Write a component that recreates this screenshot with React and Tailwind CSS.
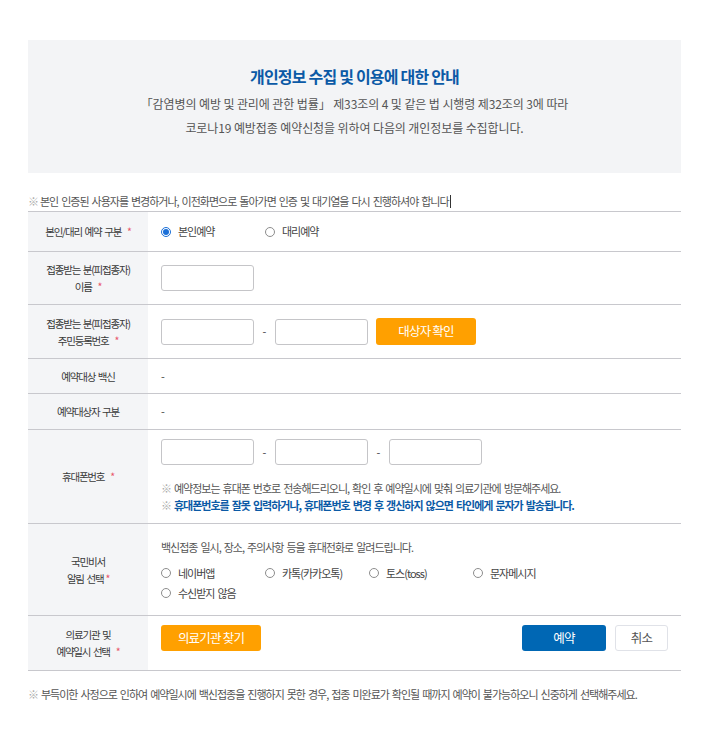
import React from 'react';

const body = "text-[11px] tracking-[-1px] [word-spacing:1.5px]";
const label = "text-[10.5px] tracking-[-1.2px] [word-spacing:1.5px]";

const Star = ({ tight }) => (
  <span className={`text-[#e8576a] ${tight ? 'ml-[2px]' : 'ml-[6px]'}`}>*</span>
);

const Radio = ({ checked, label }) => (
  <label className="flex items-center h-[20px] gap-[7px] text-[#444]">
    {checked ? (
      <span className="w-[10px] h-[10px] rounded-full border border-[#1a6fd8] bg-white flex items-center justify-center shrink-0">
        <span className="w-[6px] h-[6px] rounded-full bg-[#1a6fd8]" />
      </span>
    ) : (
      <span className="w-[10px] h-[10px] rounded-full border border-[#8d8d8d] bg-white shrink-0" />
    )}
    <span className={body}>{label}</span>
  </label>
);

const Input = () => (
  <input className="w-[93px] h-[26px] border border-[#c5c5c8] rounded-[3px] bg-white outline-none shrink-0" />
);

const Dash = () => <span className="w-[21px] text-center text-[#444] text-[11px]">-</span>;

const Row = ({ h, title, children, className = '' }) => (
  <div className="flex border-b border-[#c8c8cd]" style={{ height: h }}>
    <div className={`w-[120px] shrink-0 bg-[#f4f5f7] flex flex-col items-center justify-center text-center text-[#3a3a3a] leading-[17px] ${label}`}>
      {title}
    </div>
    <div className={`flex-1 pl-[13px] ${className}`}>{children}</div>
  </div>
);

export default function App() {
  return (
    <div className="w-[718px] min-h-[741px] bg-white font-['Noto_Sans_CJK_KR',sans-serif] pt-[40px]">
      <div className="ml-[28px] w-[653px]">
        {/* 안내 박스 */}
        <div className="bg-[#f3f4f6] h-[133px] pt-[24px]">
          <p className="text-center text-[16px] leading-[24px] font-bold text-[#0b5aa6] tracking-[-0.8px]">
            개인정보 수집 및 이용에 대한 안내
          </p>
          <p className="mt-[4px] text-center text-[12px] leading-[24px] text-[#555] tracking-[-0.1px]">
            「감염병의 예방 및 관리에 관한 법률」 제33조의 4 및 같은 법 시행령 제32조의 3에 따라
          </p>
          <p className="text-center text-[12px] leading-[24px] text-[#555] tracking-[-0.1px]">
            코로나19 예방접종 예약신청을 위하여 다음의 개인정보를 수집합니다.
          </p>
        </div>

        <div className={`h-[38px] pb-[3px] flex items-end ${body} text-[#555]`}>
          <span className="leading-[14px] flex items-center">
            <span className="text-[#aaa] mr-[2px]">※</span>본인 인증된 사용자를 변경하거나, 이전화면으로 돌아가면 인증 및 대기열을 다시 진행하셔야 합니다
            <span className="inline-block w-px h-[13px] bg-[#333] ml-[1px]" />
          </span>
        </div>

        {/* 예약 표 */}
        <div className="border-t border-[#c8c8cd]">
          <Row h={40} title={<span>본인/대리 예약 구분<Star /></span>} className="flex items-center">
            <div className="w-[104px]"><Radio checked label="본인예약" /></div>
            <div className="w-[104px]"><Radio label="대리예약" /></div>
          </Row>

          <Row h={53} title={<><span>접종받는 분(피접종자)</span><span>이름<Star /></span></>} className="flex items-center">
            <Input />
          </Row>

          <Row h={54} title={<><span>접종받는 분(피접종자)</span><span>주민등록번호<Star /></span></>} className="flex items-center">
            <Input />
            <Dash />
            <Input />
            <button className="ml-[8px] w-[100px] h-[27px] rounded-[3px] bg-[#ffa000] text-white text-[12.5px] tracking-[-0.8px]">
              대상자 확인
            </button>
          </Row>

          <Row h={35} title="예약대상 백신" className={`flex items-center text-[#444] ${body}`}>
            -
          </Row>

          <Row h={36} title="예약대상자 구분" className={`flex items-center text-[#444] ${body}`}>
            -
          </Row>

          <Row h={94} title={<span>휴대폰번호<Star /></span>} className="pt-[9px]">
            <div className="flex items-center">
              <Input />
              <Dash />
              <Input />
              <Dash />
              <Input />
            </div>
            <div className={`mt-[15px] leading-[17px] ${body}`}>
              <p className="text-[#555]"><span className="text-[#aaa]">※</span> 예약정보는 휴대폰 번호로 전송해드리오니, 확인 후 예약일시에 맞춰 의료기관에 방문해주세요.</p>
              <p className="text-[#0b5aa6] font-bold"><span className="text-[#aaa] font-normal">※</span> 휴대폰번호를 잘못 입력하거나, 휴대폰번호 변경 후 갱신하지 않으면 타인에게 문자가 발송됩니다.</p>
            </div>
          </Row>

          <Row h={92} title={<><span>국민비서</span><span>알림 선택<Star tight /></span></>} className="pt-[15px]">
            <p className={`leading-[17px] text-[#555] ${body}`}>백신접종 일시, 장소, 주의사항 등을 휴대전화로 알려드립니다.</p>
            <div className="mt-[7px] grid grid-cols-[repeat(4,104px)]">
              <Radio label="네이버앱" />
              <Radio label="카톡(카카오톡)" />
              <Radio label="토스(toss)" />
              <Radio label="문자메시지" />
              <Radio label="수신받지 않음" />
            </div>
          </Row>

          <Row h={55} title={<><span>의료기관 및</span><span>예약일시 선택<Star /></span></>} className="flex items-start pt-[9px] pr-[13px]">
            <button className="w-[100px] h-[26px] rounded-[3px] bg-[#ffa000] text-white text-[12.5px] tracking-[-0.8px]">
              의료기관 찾기
            </button>
            <button className="ml-auto w-[84px] h-[26px] rounded-[3px] bg-[#0067b4] text-white text-[12.5px] tracking-[-0.8px]">
              예약
            </button>
            <button className="ml-[9px] w-[53px] h-[26px] rounded-[3px] bg-white border border-[#e0e2e8] text-[#555] text-[12.5px] tracking-[-0.8px]">
              취소
            </button>
          </Row>
        </div>

        <p className={`mt-[16px] leading-[14px] text-[#555] ${body}`}>
          <span className="text-[#aaa]">※</span> 부득이한 사정으로 인하여 예약일시에 백신접종을 진행하지 못한 경우, 접종 미완료가 확인될 때까지 예약이 불가능하오니 신중하게 선택해주세요.
        </p>
      </div>
    </div>
  );
}
